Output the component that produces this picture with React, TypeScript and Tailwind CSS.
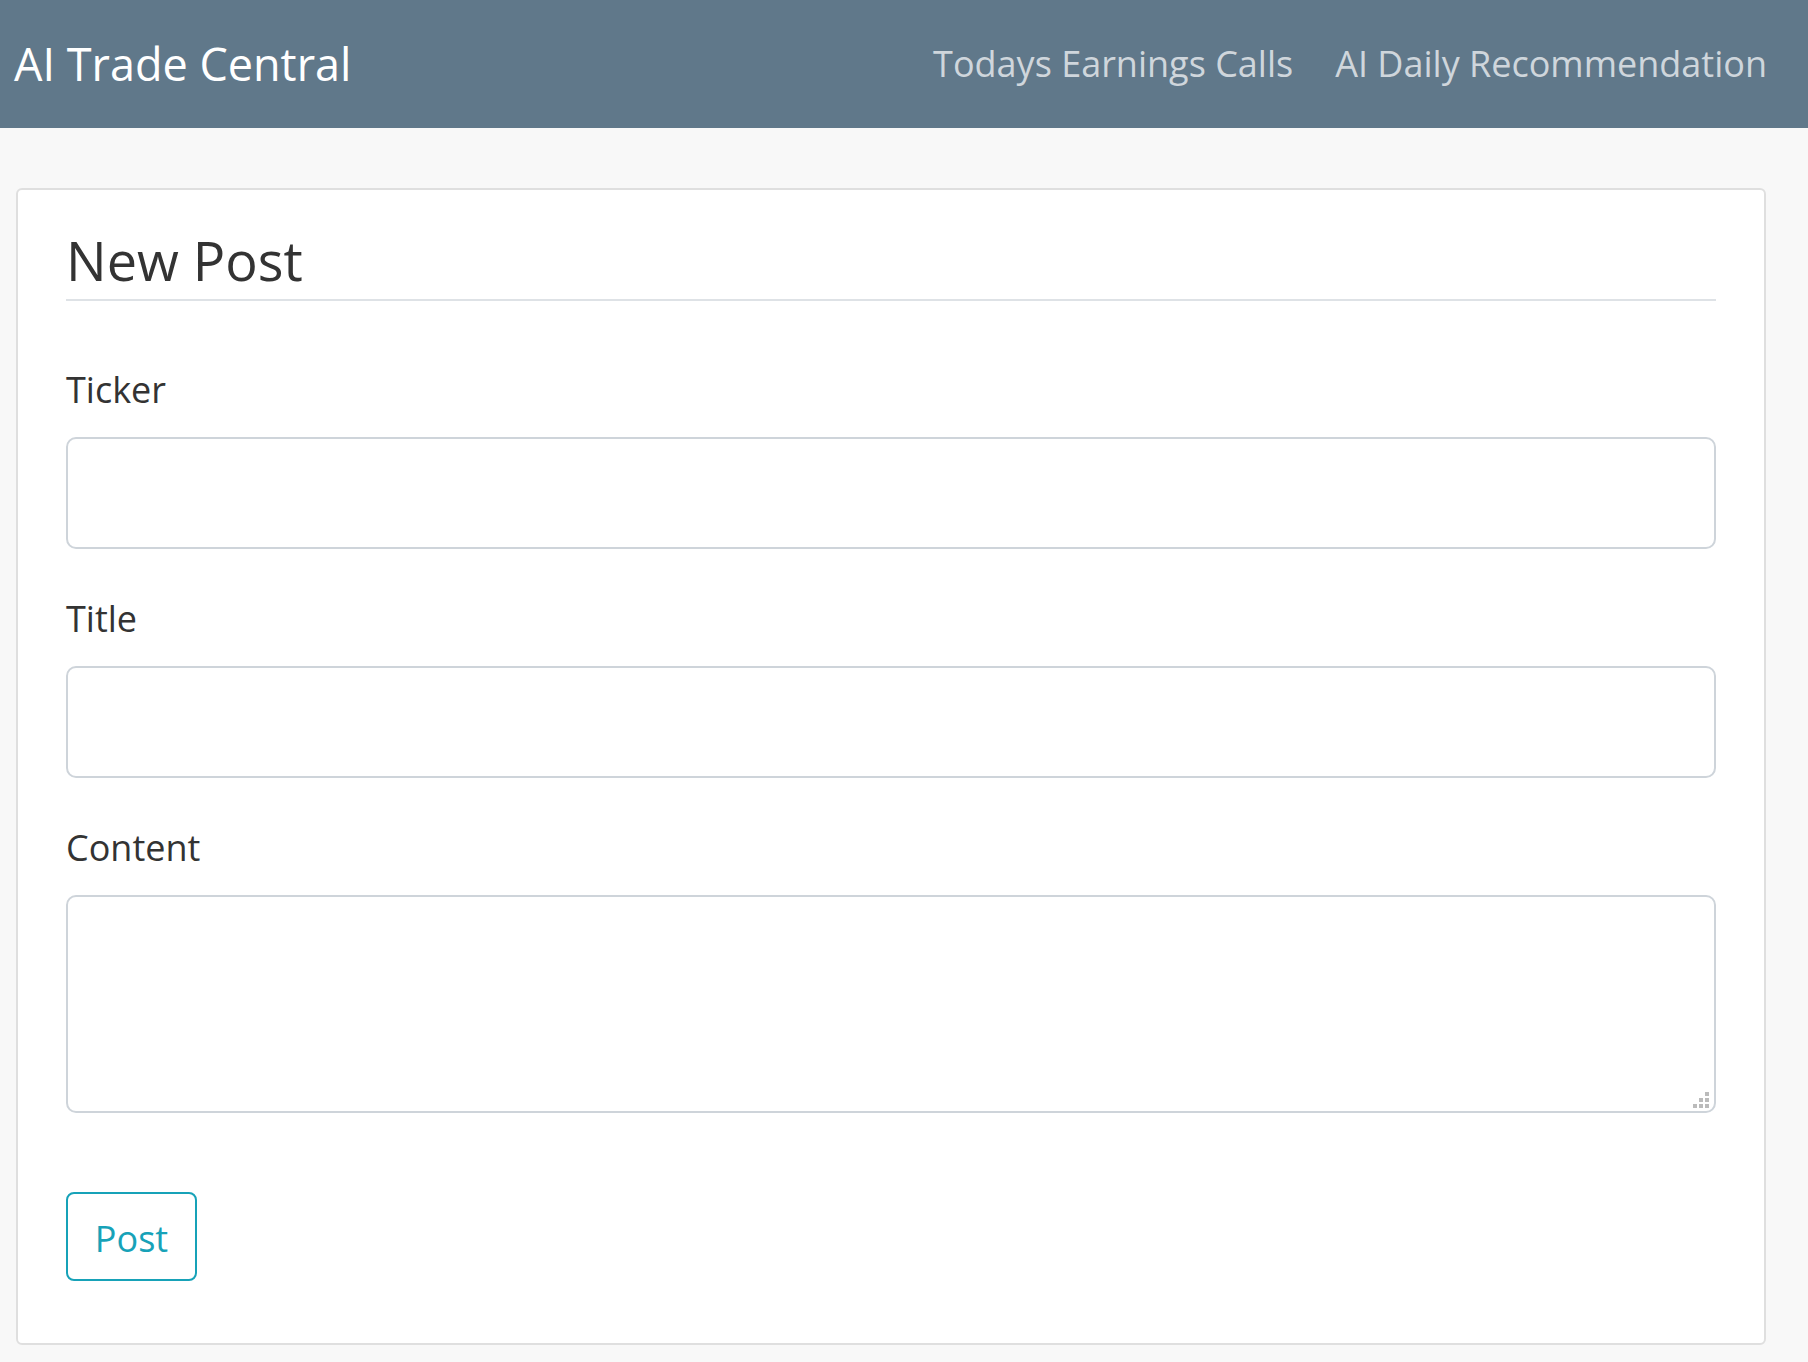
import { useState } from "react";

const font = { fontFamily: "'Open Sans', 'Noto Sans', sans-serif" };

const navLinks = ["Todays Earnings Calls", "AI Daily Recommendation"];

// 3x3 grip, lower-right triangle filled
const gripDots = [
  [2, 0],
  [1, 1],
  [2, 1],
  [0, 2],
  [1, 2],
  [2, 2],
];

function Field({ label, children }: { label: string; children: React.ReactNode }) {
  return (
    <div className="flex flex-col">
      <label className="mb-[20px] text-[36px] leading-[54px] text-[#333]">{label}</label>
      {children}
    </div>
  );
}

export default function App() {
  const [ticker, setTicker] = useState("");
  const [title, setTitle] = useState("");
  const [content, setContent] = useState("");

  return (
    <div className="min-h-[1362px] bg-[#f8f8f8]" style={font}>
      <nav className="flex h-[128px] items-center justify-between bg-[#60788a] pl-[14px] pr-[41px]">
        <a href="#" className="text-[45px] leading-[60px] text-white">
          AI Trade Central
        </a>
        <div className="flex items-center gap-[42px]">
          {navLinks.map((link) => (
            <a key={link} href="#" className="text-[36px] leading-[54px] text-[#cfd6dc]">
              {link}
            </a>
          ))}
        </div>
      </nav>

      <div className="ml-4 mt-[60px] w-[1750px] rounded-[6px] border-2 border-[#dfdfdf] bg-white px-[48px] pb-[62px] pt-[38px]">
        <h4 className="border-b-2 border-[#dee2e6] pb-[6px] text-[54px] leading-[65px] text-[#333]">
          New Post
        </h4>

        <form className="mt-[62px] flex flex-col gap-[43px]" onSubmit={(e) => e.preventDefault()}>
          <Field label="Ticker">
            <input
              value={ticker}
              onChange={(e) => setTicker(e.target.value)}
              className="h-[112px] w-full rounded-[10px] border-2 border-[#ced4da] bg-white px-[36px] text-[36px] text-[#495057] outline-none"
            />
          </Field>
          <Field label="Title">
            <input
              value={title}
              onChange={(e) => setTitle(e.target.value)}
              className="h-[112px] w-full rounded-[10px] border-2 border-[#ced4da] bg-white px-[36px] text-[36px] text-[#495057] outline-none"
            />
          </Field>
          <Field label="Content">
            <div className="relative">
              <textarea
                value={content}
                onChange={(e) => setContent(e.target.value)}
                className="block h-[218px] w-full resize-none rounded-[10px] border-2 border-[#ced4da] bg-white px-[36px] py-[18px] text-[36px] text-[#495057] outline-none"
              />
              <svg
                className="pointer-events-none absolute bottom-[4px] right-[6px]"
                width="17"
                height="17"
                viewBox="0 0 17 17"
              >
                {gripDots.map(([c, r]) => (
                  <rect key={`${c}-${r}`} x={c * 6} y={r * 6} width="4" height="4" fill="#bbb" />
                ))}
              </svg>
            </div>
          </Field>

          <div className="mt-[36px]">
            <button
              type="submit"
              className="h-[89px] w-[131px] rounded-[8px] border-2 border-[#17a2b8] pt-[4px] text-[36px] leading-[54px] text-[#17a2b8]"
            >
              Post
            </button>
          </div>
        </form>
      </div>
    </div>
  );
}
